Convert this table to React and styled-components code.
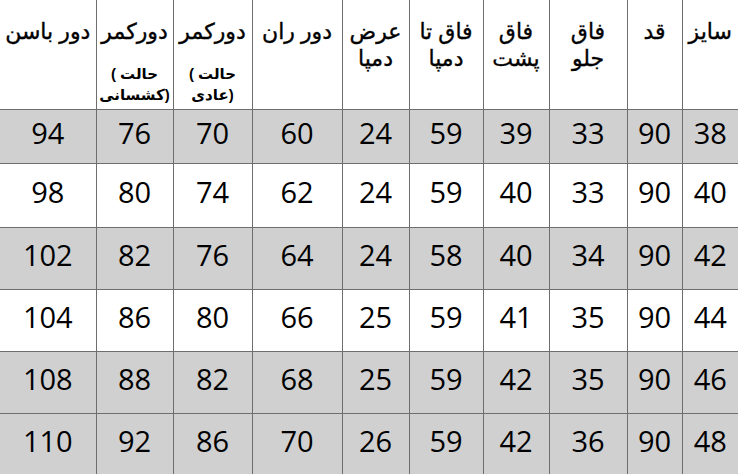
import React from 'react';
import styled, { createGlobalStyle } from 'styled-components';

const GlobalStyle = createGlobalStyle`
    html, body {
        margin: 0;
        padding: 0;
        background: #ffffff;
    }
`;

const Sheet = styled.table`
    width: 738px;
    table-layout: fixed;
    border-collapse: collapse;
    direction: rtl;
    color: #000;
`;

const HeadCell = styled.th`
    vertical-align: top;
    text-align: center;
    padding: 18px 2px 0 2px;
    border-left: 1px solid #6e6e6e;
    border-bottom: 1px solid #6e6e6e;
    font-family: "Liberation Sans", "DejaVu Sans", sans-serif;
    font-size: 22px;
    line-height: 27px;
    font-weight: normal;
    -webkit-text-stroke: 0.35px #000;
    &:last-child {
        border-left: none;
    }
`;

const Note = styled.div`
    margin-top: 18px;
    font-size: 15px;
    line-height: 21px;
    font-weight: bold;
    -webkit-text-stroke: 0;
`;

const Row = styled.tr`
    height: ${p => p.h}px;
    background: ${p => (p.shaded ? '#d0d0d0' : '#ffffff')};
`;

const Cell = styled.td`
    text-align: center;
    vertical-align: middle;
    padding: 0 0 7px 0;
    border-left: 1px solid #6e6e6e;
    border-bottom: 1px solid #6e6e6e;
    font-family: "Open Sans", "Noto Sans", sans-serif;
    font-size: 29px;
    direction: ltr;
    &:last-child {
        border-left: none;
    }
`;

const widths = [56, 55, 78, 66, 74, 67, 90, 79, 77, 96];

const headers = [
    { lines: ['سایز'] },
    { lines: ['قد'] },
    { lines: ['فاق', 'جلو'] },
    { lines: ['فاق', 'پشت'] },
    { lines: ['فاق تا', 'دمپا'] },
    { lines: ['عرض', 'دمپا'] },
    { lines: ['دور ران'] },
    { lines: ['دورکمر'], note: ['حالت )', '(عادی'] },
    { lines: ['دورکمر'], note: ['حالت )', '(کشسانی'] },
    { lines: ['دور باسن'] },
];

const rows = [
    { h: 54, shaded: true, v: [38, 90, 33, 39, 59, 24, 60, 70, 76, 94] },
    { h: 64, shaded: false, v: [40, 90, 33, 40, 59, 24, 62, 74, 80, 98] },
    { h: 62, shaded: true, v: [42, 90, 34, 40, 58, 24, 64, 76, 82, 102] },
    { h: 62, shaded: false, v: [44, 90, 35, 41, 59, 25, 66, 80, 86, 104] },
    { h: 62, shaded: true, v: [46, 90, 35, 42, 59, 25, 68, 82, 88, 108] },
    { h: 61, shaded: true, v: [48, 90, 36, 42, 59, 26, 70, 86, 92, 110] },
];

const App = () => {
    return (
        <>
            <GlobalStyle />
            <Sheet>
                <colgroup>
                    {widths.map((w, i) => (
                        <col key={i} style={{ width: w }} />
                    ))}
                </colgroup>
                <thead>
                    <Row h={109}>
                        {headers.map((hd, i) => (
                            <HeadCell key={i}>
                                {hd.lines.map((l, j) => (
                                    <div key={j}>{l}</div>
                                ))}
                                {hd.note && (
                                    <Note>
                                        {hd.note.map((l, j) => (
                                            <div key={j}>{l}</div>
                                        ))}
                                    </Note>
                                )}
                            </HeadCell>
                        ))}
                    </Row>
                </thead>
                <tbody>
                    {rows.map((r, i) => (
                        <Row key={i} h={r.h} shaded={r.shaded}>
                            {r.v.map((n, j) => (
                                <Cell key={j}>{n}</Cell>
                            ))}
                        </Row>
                    ))}
                </tbody>
            </Sheet>
        </>
    );
};

export default App;
